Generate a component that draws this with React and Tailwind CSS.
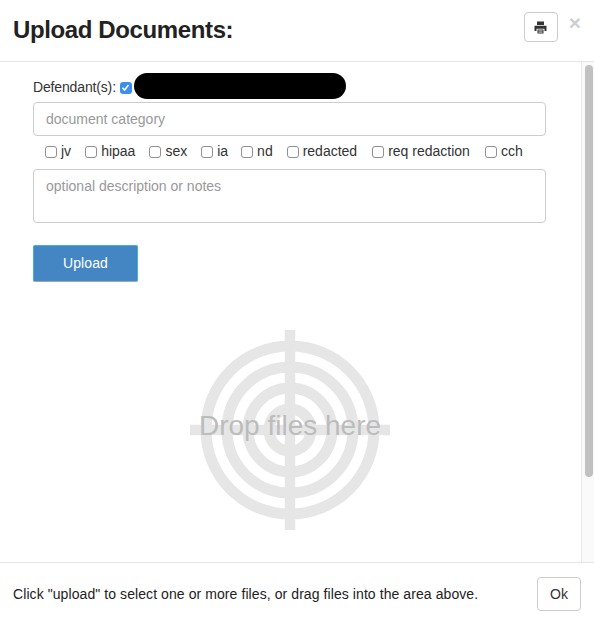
import React from 'react';

const tags = [
  { label: 'jv', gap: 'mr-[14px]' },
  { label: 'hipaa', gap: 'mr-[14px]' },
  { label: 'sex', gap: 'mr-[14px]' },
  { label: 'ia', gap: 'mr-[13px]' },
  { label: 'nd', gap: 'mr-[14px]' },
  { label: 'redacted', gap: 'mr-[15px]' },
  { label: 'req redaction', gap: 'mr-[15px]' },
  { label: 'cch', gap: '' },
];

function Target() {
  return (
    <svg width="200" height="200" viewBox="0 0 200 200" fill="none" stroke="#e6e6e6">
      <circle cx="100" cy="100" r="84" strokeWidth="11" />
      <circle cx="100" cy="100" r="63" strokeWidth="11" />
      <circle cx="100" cy="100" r="42" strokeWidth="11" />
      <circle cx="100" cy="100" r="21" strokeWidth="11" />
      <path d="M100 0V200M0 100H200" strokeWidth="10.5" />
    </svg>
  );
}

function PrintIcon() {
  return (
    <svg width="13" height="13" viewBox="0 0 13 13" fill="#333">
      <path d="M3 0.5h7v3.5H3zM0.5 4.8h12v5.2h-2V7.8h-8V10h-2zM3.5 8.6h6v3.9h-6z" />
      <path d="M4.5 9.8h4M4.5 11.2h4" stroke="#fff" strokeWidth="0.7" />
    </svg>
  );
}

export default function App() {
  return (
    <div className="flex h-[624px] w-[594px] flex-col overflow-hidden bg-white font-['Liberation_Sans',Arial,sans-serif] text-sm text-[#333]">
      <header className="flex h-[62px] shrink-0 items-start justify-between border-b border-[#e5e5e5] pl-[13px] pr-[13px]">
        <h1 className="mt-[16px] text-[24px] leading-[28px] font-bold tracking-[-0.38px] text-[#222]">Upload Documents:</h1>
        <div className="flex items-start gap-[11px]">
          <button className="mt-[12px] flex h-[30px] w-[34px] items-center justify-center rounded-[4px] border border-[#ccc] bg-white">
            <PrintIcon />
          </button>
          <span className="mt-[12px] text-[21px] leading-[21px] font-bold text-[#cfcfcf]">×</span>
        </div>
      </header>

      <div className="flex min-h-0 flex-1">
        <main className="relative flex-1 pl-[33px] pr-[35px] pt-[11px]">
          <div className="flex h-[26px] items-center">
            <span className="mt-[2px] text-[14px] tracking-[-0.15px] text-[#333]">Defendant(s):</span>
            <span className="ml-[4px] mt-[3px] flex h-[12px] w-[12px] items-center justify-center rounded-[3px] bg-[#3b8ff0]">
              <svg width="9" height="9" viewBox="0 0 9 9" fill="none" stroke="#fff" strokeWidth="1.5">
                <path d="M1.5 4.8L3.6 7L7.5 2" />
              </svg>
            </span>
            <span className="ml-[2px] h-[26px] w-[212px] rounded-full bg-black"></span>
          </div>

          <input
            placeholder="document category"
            className="mt-[3px] block h-[34px] w-full rounded-[4px] border border-[#ccc] bg-white px-[12px] text-[14px] outline-none placeholder:text-[#999]"
          />

          <div className="mt-[6px] flex h-[18px] items-center pl-[12px] text-[14px]">
            {tags.map(t => (
              <label key={t.label} className={`flex items-center ${t.gap}`}>
                <input type="checkbox" className="mr-[4px] mt-[1px] h-[12px] w-[12px] appearance-none rounded-[3px] border border-[#8f8f8f] bg-white" />
                <span>{t.label}</span>
              </label>
            ))}
          </div>

          <textarea
            placeholder="optional description or notes"
            className="mt-[9px] block h-[54px] w-full resize-none rounded-[4px] border border-[#ccc] bg-white px-[12px] py-[6px] text-[14px] leading-[20px] outline-none placeholder:text-[#999]"
          />

          <button className="mt-[22px] block h-[37px] w-[105px] rounded-[2px] border border-[#46b0cf] border-b-[#9aa9b5] bg-[#4486c4] pb-[2px] text-[14px] font-medium tracking-[0.1px] text-white">
            Upload
          </button>

          <div className="absolute left-[190px] top-[268px]">
            <Target />
            <span className="absolute inset-0 flex items-center justify-center pb-[9px] text-[28px] whitespace-nowrap text-[#bcbcbc]">
              Drop files here
            </span>
          </div>
        </main>

        <div className="flex w-[13px] shrink-0 justify-end border-l border-[#e8e8e8] bg-[#fafafa] pr-[1px] pt-[3px]">
          <div className="h-[412px] w-[8px] rounded-full bg-[#c1c1c1]"></div>
        </div>
      </div>

      <footer className="flex h-[62px] shrink-0 items-center justify-between border-t border-[#e5e5e5] pl-[13px] pr-[13px]">
        <p className="text-[14px] tracking-[0.08px] text-[#222]">Click "upload" to select one or more files, or drag files into the area above.</p>
        <button className="h-[34px] w-[44px] rounded-[4px] border border-[#ccc] bg-white text-[14px] text-[#333]">Ok</button>
      </footer>
    </div>
  );
}
